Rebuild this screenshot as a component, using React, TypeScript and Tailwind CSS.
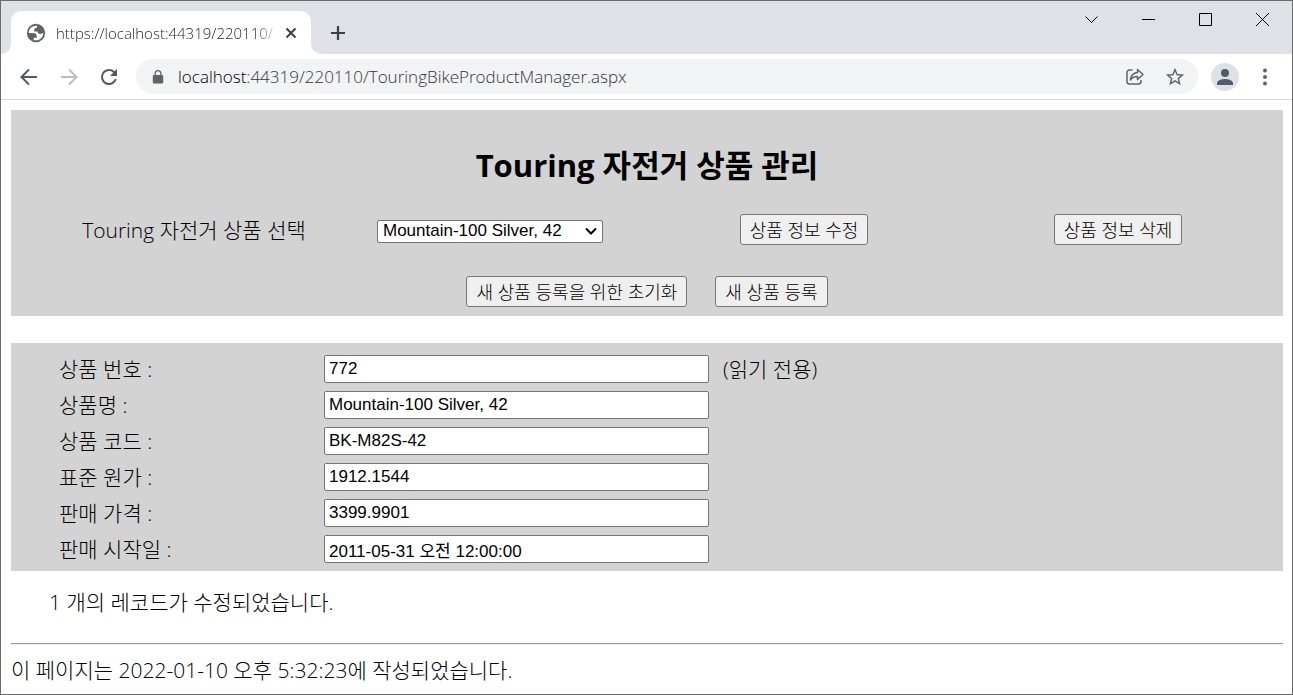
import React, { useState } from "react";

const buttonClass =
  "flex h-[31px] items-center justify-center rounded-[3px] border border-[#767676] bg-[#efefef] px-[9px] text-[18px] leading-6 font-light whitespace-nowrap text-black hover:bg-[#e5e5e5]";

interface Field {
  id: string;
  label: string;
  value: string;
  readOnly?: boolean;
}

const fields: Field[] = [
  { id: "product-id", label: "상품 번호 :", value: "772", readOnly: true },
  { id: "product-name", label: "상품명 :", value: "Mountain-100 Silver, 42" },
  { id: "product-code", label: "상품 코드 :", value: "BK-M82S-42" },
  { id: "standard-cost", label: "표준 원가 :", value: "1912.1544" },
  { id: "list-price", label: "판매 가격 :", value: "3399.9901" },
  { id: "sell-start", label: "판매 시작일 :", value: "2011-05-31 오전 12:00:00" },
];

function TabStrip() {
  return (
    <div className="flex h-[53px] items-start justify-between bg-[#dee1e6]">
      <div className="flex h-full items-end">
        <svg width="10" height="10" viewBox="0 0 10 10" className="fill-white">
          <path d="M10 0v10H0A10 10 0 0 0 10 0z" />
        </svg>
        <div className="flex h-[43px] w-[300px] items-center rounded-t-[10px] bg-white pr-[10px] pl-[14px]">
          <svg width="22" height="22" viewBox="0 0 24 24" className="shrink-0 fill-[#5f6368]">
            <path
              fillRule="evenodd"
              d="M12 2a10 10 0 1 0 0 20 10 10 0 0 0 0-20zM4 12h4.4c3.407.022 4.922 1.73 4.543 5.127H9.488v2.47a8.004 8.004 0 0 0 10.498-8.08C19.327 12.506 18.332 13 17 13c-2.137 0-3.206-.916-3.206-2.75h-3.748c-.274-2.728.683-4.092 2.87-4.092 0-.975.327-1.597.811-1.97A8.004 8.004 0 0 0 4 12z"
            />
          </svg>
          <span className="ml-[9px] flex-1 bg-linear-to-r from-[#202124] from-88% to-transparent bg-clip-text font-['Open_Sans'] text-[15px] leading-6 font-light whitespace-nowrap text-transparent">
            https://localhost:44319/220110/
          </span>
          <button aria-label="Close tab" className="flex size-5 shrink-0 items-center justify-center">
            <svg width="12" height="12" viewBox="0 0 12 12" className="fill-none stroke-[#3c4043]" strokeWidth="2">
              <path d="M1.500 1.500l9 9M10.500 1.500l-9 9" />
            </svg>
          </button>
        </div>
        <svg width="10" height="10" viewBox="0 0 10 10" className="fill-white">
          <path d="M0 0v10h10A10 10 0 0 1 0 0z" />
        </svg>
        <button aria-label="New tab" className="mb-3 ml-2 flex size-[18px] items-center justify-center">
          <svg width="16" height="16" viewBox="0 0 16 16" className="fill-none stroke-[#3c4043]" strokeWidth="2.2">
            <path d="M8 1v14M1 8h14" />
          </svg>
        </button>
      </div>
      <div className="flex h-9 items-center pr-px">
        {[
          { name: "Search tabs", d: "M1.500 4.500L7.500 10.500L13.500 4.500" },
          { name: "Minimize", d: "M1 7.500h13" },
          { name: "Maximize", d: "M1.500 1.500h12v12h-12z" },
          { name: "Close", d: "M1 1l13 13M14 1L1 14" },
        ].map((item) => (
          <button key={item.name} aria-label={item.name} className="flex h-full w-[57px] items-center justify-center">
            <svg width="15" height="15" viewBox="0 0 15 15" className="fill-none stroke-black">
              <path d={item.d} />
            </svg>
          </button>
        ))}
      </div>
    </div>
  );
}

function Toolbar() {
  return (
    <div className="flex h-[46px] items-center border-b border-[#d5d7da] pr-[17px] pl-4">
      <button aria-label="Back" className="flex size-6 items-center justify-center">
        <svg width="18" height="18" viewBox="0 0 18 18" className="fill-none stroke-[#55595e]" strokeWidth="2">
          <path d="M17 9H2.500M9 1.500L1.500 9L9 16.500" />
        </svg>
      </button>
      <button aria-label="Forward" className="ml-4 flex size-6 items-center justify-center">
        <svg width="18" height="18" viewBox="0 0 18 18" className="fill-none stroke-[#babcbe]" strokeWidth="2">
          <path d="M1 9h14.500M9 1.500L16.500 9L9 16.500" />
        </svg>
      </button>
      <button aria-label="Reload" className="ml-4 flex size-6 items-center justify-center">
        <svg width="24" height="24" viewBox="0 0 24 24" className="fill-[#55595e]">
          <path d="M17.650 6.350A7.958 7.958 0 0 0 12 4a8 8 0 1 0 7.730 10h-2.080A6 6 0 1 1 12 6c1.660 0 3.140.690 4.220 1.780L13 11h7V4l-2.350 2.350z" />
        </svg>
      </button>
      <div className="ml-[15px] flex h-[35px] min-w-0 flex-1 items-center rounded-full bg-[#f1f3f4] pr-[11px] pl-[14px]">
        <svg width="16" height="16" viewBox="0 0 16 16" className="shrink-0 fill-[#5f6368]">
          <path d="M12 6h-.5V4.500a3.500 3.500 0 0 0-7 0V6H4A1.200 1.200 0 0 0 2.800 7.200v6.100A1.200 1.200 0 0 0 4 14.500h8a1.200 1.200 0 0 0 1.200-1.200V7.200A1.200 1.200 0 0 0 12 6zM5.800 6V4.500a2.200 2.200 0 0 1 4.400 0V6z" />
        </svg>
        <div className="ml-3 flex-1 truncate font-['Open_Sans'] text-[17px] leading-6 font-light text-[#33373b]">
          <span className="text-black">localhost</span>:44319/220110/TouringBikeProductManager.aspx
        </div>
        <button aria-label="Share" className="flex size-6 items-center justify-center">
          <svg
            width="20"
            height="20"
            viewBox="0 0 20 20"
            className="fill-none stroke-[#5f6368]"
            strokeWidth="1.500"
            strokeLinejoin="round"
          >
            <path d="M7.500 3H4.500A2.500 2.500 0 0 0 2 5.500v9A2.500 2.500 0 0 0 4.500 17h9a2.500 2.500 0 0 0 2.500-2.500V13" />
            <path d="M12.500 2.500L18 7.500L12.500 12.500V9.500C9 9.500 7 10.500 5.500 13C5.800 9 8.500 6 12.500 5.500Z" />
          </svg>
        </button>
        <button aria-label="Bookmark" className="ml-4 flex size-6 items-center justify-center">
          <svg width="22" height="22" viewBox="0 0 24 24" className="fill-[#5f6368]">
            <path d="M22 9.240l-7.190-.620L12 2 9.190 8.630 2 9.240l5.460 4.730L5.820 21 12 17.270 18.180 21l-1.630-7.030L22 9.240zM12 15.400l-3.760 2.270 1-4.280-3.320-2.880 4.380-.380L12 6.100l1.710 4.040 4.380.380-3.320 2.880 1 4.280L12 15.400z" />
          </svg>
        </button>
      </div>
      <button
        aria-label="Profile"
        className="ml-[13px] flex size-7 items-center justify-center rounded-full bg-[#dee1e6]"
      >
        <svg width="24" height="24" viewBox="0 0 24 24" className="fill-[#535c6d]">
          <path d="M12 12a4 4 0 1 0 0-8 4 4 0 0 0 0 8zm0 2c-2.670 0-8 1.340-8 4v2h16v-2c0-2.660-5.330-4-8-4z" />
        </svg>
      </button>
      <button aria-label="Menu" className="ml-4 flex h-6 w-5 items-center justify-center">
        <svg width="4" height="18" viewBox="0 0 4 18" className="fill-[#5f6368]">
          <circle cx="2" cy="2.500" r="2" />
          <circle cx="2" cy="9" r="2" />
          <circle cx="2" cy="15.500" r="2" />
        </svg>
      </button>
    </div>
  );
}

export default function App() {
  const [values, setValues] = useState<Record<string, string>>(() =>
    Object.fromEntries(fields.map((field) => [field.id, field.value]))
  );

  return (
    <div className="flex min-h-screen flex-col border border-[#6b6b6b] bg-white font-['Open_Sans','Noto_Sans_CJK_KR',sans-serif] text-black">
      <TabStrip />
      <Toolbar />
      <main className="pt-[10px] pr-[9px] pl-[10px] text-[21px] leading-7">
        <section className="bg-[#d3d3d3] pt-[31px] pb-[9px]">
          <h1 className="text-center text-[31px] leading-[48px] font-bold">Touring 자전거 상품 관리</h1>
          <div className="mt-[25px] grid grid-cols-[278fr_314fr_314fr_314fr] items-center justify-items-center pr-2 pl-11">
            <label htmlFor="bike" className="font-light">
              Touring 자전거 상품 선택
            </label>
            <div className="relative flex items-center pt-[3px]">
              <select
                id="bike"
                className="h-[23px] w-[226px] appearance-none rounded-[2px] border border-[#767676] bg-white pl-[5px] font-['Liberation_Sans'] text-[17px] leading-5"
              >
                <option>Mountain-100 Silver, 42</option>
              </select>
              <svg
                width="12"
                height="8"
                viewBox="0 0 12 8"
                className="pointer-events-none absolute right-[6px] fill-none stroke-black"
                strokeWidth="2"
              >
                <path d="M1 1.500l5 5 5-5" />
              </svg>
            </div>
            <button className={buttonClass}>상품 정보 수정</button>
            <button className={buttonClass}>상품 정보 삭제</button>
          </div>
          <div className="mt-[31px] flex justify-center gap-7">
            <button className={buttonClass}>새 상품 등록을 위한 초기화</button>
            <button className={buttonClass}>새 상품 등록</button>
          </div>
        </section>

        <form className="mt-[27px] flex flex-col gap-2 bg-[#d3d3d3] pt-3 pb-2 pl-12">
          {fields.map((field) => (
            <div key={field.id} className="flex h-7 items-center">
              <label htmlFor={field.id} className="w-[265px] font-light">
                {field.label}
              </label>
              <input
                id={field.id}
                value={values[field.id]}
                readOnly={field.readOnly}
                onChange={(event) => setValues({ ...values, [field.id]: event.target.value })}
                className="h-7 w-[385px] rounded-[2px] border border-[#767676] bg-white px-1 font-['Liberation_Sans','Noto_Sans_CJK_KR',sans-serif] text-[17px] leading-6"
              />
              {field.readOnly && <span className="ml-[14px] font-light">(읽기 전용)</span>}
            </div>
          ))}
        </form>

        <p className="mt-[17px] pl-[38px] font-light">1 개의 레코드가 수정되었습니다.</p>
        <hr className="mt-[27px] border-t border-b border-t-[#9a9a9a] border-b-[#ededed]" />
        <p className="mt-[11px] font-light">이 페이지는 2022-01-10 오후 5:32:23에 작성되었습니다.</p>
      </main>
    </div>
  );
}
